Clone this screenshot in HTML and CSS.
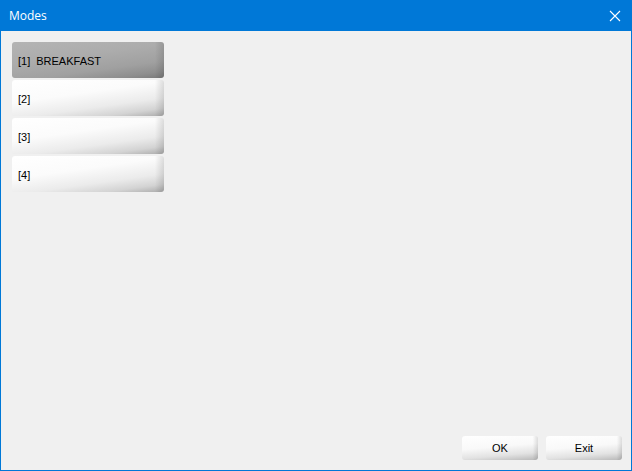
FILE: index.html
```html
<!DOCTYPE html>
<html lang="en">
<head>
  <meta charset="UTF-8">
  <title>Modes</title>
  <link rel="stylesheet" href="styles.css">
</head>
<body>
  <div class="window">
    <!-- Title bar -->
    <div class="titlebar">
      <span class="title">Modes</span>
      <svg class="close" width="12" height="12" viewBox="0 0 12 12">
        <path d="M1 1 L11 11 M11 1 L1 11" stroke="#fff" stroke-width="1.1" fill="none"/>
      </svg>
    </div>

    <!-- Mode list -->
    <div class="content">
      <div class="modes">
        <div class="mode selected"><span class="num">[1]</span>BREAKFAST</div>
        <div class="mode"><span class="num">[2]</span></div>
        <div class="mode"><span class="num">[3]</span></div>
        <div class="mode"><span class="num">[4]</span></div>
      </div>
    </div>

    <!-- Footer buttons -->
    <div class="actions">
      <div class="btn">OK</div>
      <div class="btn">Exit</div>
    </div>
  </div>
</body>
</html>
```

FILE: styles.css
```css
/* General */
body {
  margin: 0;
  font-family: "Liberation Sans", Arial, sans-serif;
  background: #f0f0f0;
}

.window {
  width: 632px;
  height: 471px;
  box-sizing: border-box;
  border: 1px solid #0078d7;
  border-top: none;
  display: flex;
  flex-direction: column;
  background: #f0f0f0;
}

/* Title bar */
.titlebar {
  height: 31px;
  background: #0078d7;
  display: flex;
  align-items: center;
  justify-content: space-between;
  padding: 0 10px 0 8px;
  flex-shrink: 0;
}

.title {
  color: #fff;
  font-family: "Open Sans", "Noto Sans", sans-serif;
  font-size: 12px;
  margin-top: -1px;
}

/* Content */
.content {
  flex: 1;
  padding: 11px 11px 0;
}

.modes {
  display: flex;
  flex-direction: column;
  gap: 2px;
  width: 152px;
}

.mode {
  height: 36px;
  display: flex;
  align-items: center;
  padding: 1px 0 0 6px;
  box-sizing: border-box;
  font-size: 11px;
  color: #000;
  border-radius: 3px;
  background:
    linear-gradient(to right, rgba(0,0,0,0) 94%, rgba(0,0,0,0.12) 100%),
    linear-gradient(172deg, #ffffff 0%, #fbfbfb 40%, #ebebeb 68%, #d3d3d3 86%, #acacac 100%);
}

.mode .num {
  margin-right: 6px;
}

.mode.selected {
  background:
    linear-gradient(to right, rgba(0,0,0,0) 94%, rgba(0,0,0,0.12) 100%),
    linear-gradient(172deg, #b4b4b4 0%, #acacac 40%, #a0a0a0 70%, #8e8e8e 88%, #7a7a7a 100%);
}

/* Footer */
.actions {
  display: flex;
  justify-content: flex-end;
  gap: 8px;
  padding: 0 9px 10px 0;
}

.btn {
  width: 76px;
  height: 24px;
  display: flex;
  align-items: center;
  justify-content: center;
  font-size: 11px;
  color: #000;
  border-radius: 3px;
  background:
    linear-gradient(to right, rgba(0,0,0,0) 93%, rgba(0,0,0,0.12) 100%),
    linear-gradient(175deg, #ffffff 0%, #f9f9f9 45%, #e2e2e2 75%, #b9b9b9 100%);
}
```
